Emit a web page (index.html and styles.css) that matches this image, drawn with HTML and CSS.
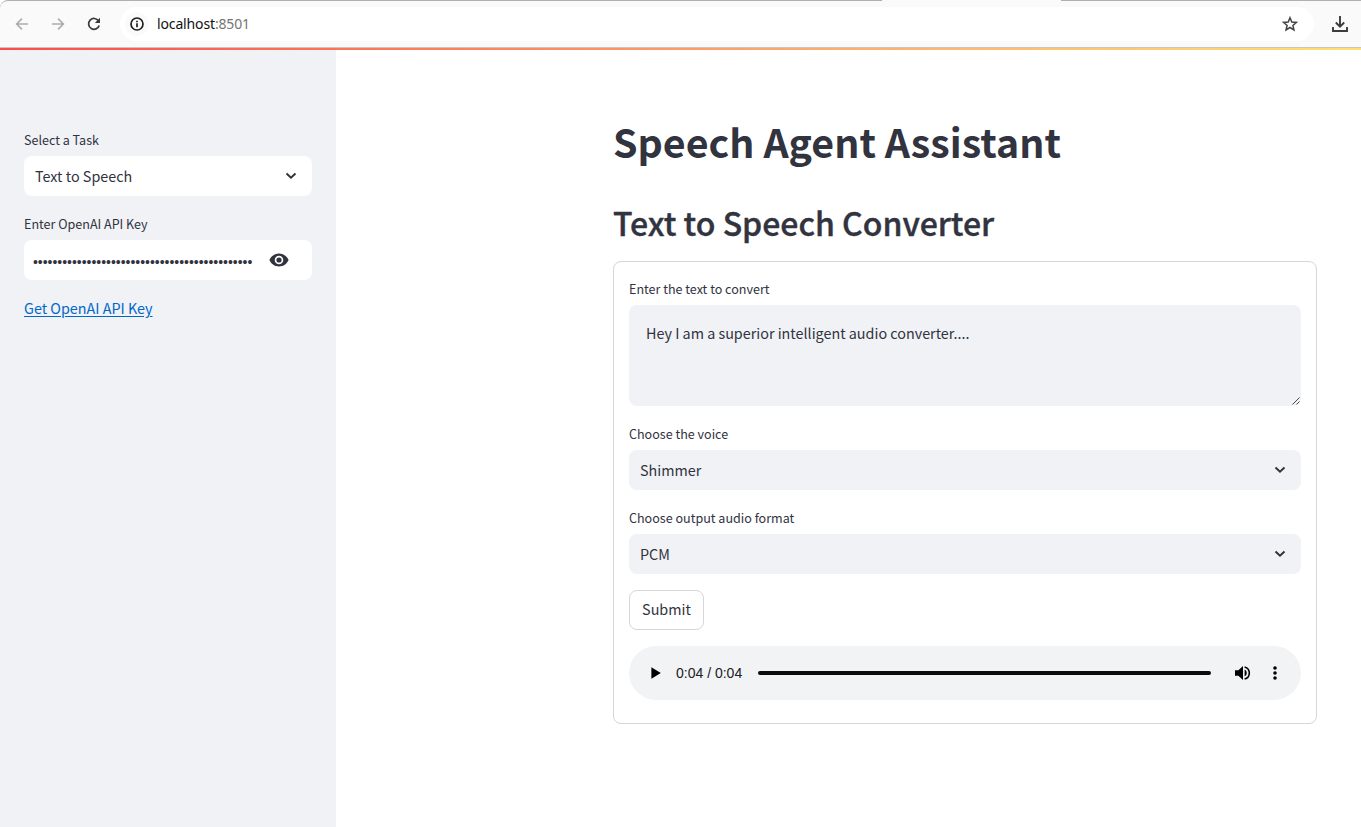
FILE: index.html
```
<!DOCTYPE html>
<html lang="en">
<head>
<meta charset="utf-8">
<title>Speech Agent Assistant</title>
<link rel="stylesheet" href="styles.css">
</head>
<body>
<header class="toolbar">
  <div class="tab-gap"></div>
  <svg class="nav back" viewBox="0 0 14 14"><path d="M13 7H2M7 1.6L1.6 7L7 12.4"/></svg>
  <svg class="nav forward" viewBox="0 0 14 14"><path d="M1 7h11M7 1.6L12.4 7L7 12.4"/></svg>
  <svg class="reload" viewBox="0 0 14 14"><path d="M11.6 4A5.4 5.4 0 1 0 12.2 8.4"/><path class="solid" d="M13 .8V6H7.8z"/></svg>
  <div class="omnibox">
    <span class="info"><svg viewBox="0 0 14 14"><circle cx="7" cy="7" r="6"/><path d="M7 6.3V10.2M7 3.8V5.2"/></svg></span>
    <span class="url">localhost<span class="port">:8501</span></span>
    <svg class="star" viewBox="0 0 16 16"><path d="M8 1.7L9.8 6l4.6.4-3.5 3 1.05 4.5L8 11.5l-3.95 2.4L5.1 9.4 1.6 6.4 6.2 6z"/></svg>
  </div>
  <svg class="download" viewBox="0 0 16 16"><path d="M8 0V10.5M3.8 6.5L8 10.7l4.2-4.2M1 11v4h14v-4"/></svg>
</header>
<div class="decoration"></div>
<div class="app">
  <aside class="sidebar">
    <div class="label">Select a Task</div>
    <div class="select"><span class="value">Text to Speech</span><svg class="chevron" viewBox="0 0 12 8"><path d="M1.500 1.500l4.500 4.200L10.500 1.500"/></svg></div>
    <div class="label">Enter OpenAI API Key</div>
    <div class="select password"><span class="dots">•••••••••••••••••••••••••••••••••••••••••••••</span><svg class="eye" viewBox="0 0 20 14"><path fill-rule="evenodd" d="M10 .6C5.6.6 1.9 3.2.4 7c1.500 3.800 5.200 6.400 9.600 6.400s8.100-2.600 9.600-6.400C18.100 3.200 14.400.6 10 .6zM10 11.300a4.300 4.300 0 1 1 0-8.600 4.300 4.300 0 0 1 0 8.600z"/><circle cx="10" cy="7" r="2.600"/></svg></div>
    <a class="link"><span>Get OpenAI API Key</span></a>
  </aside>
  <main class="main">
    <h1>Speech Agent Assistant</h1>
    <h2>Text to Speech Converter</h2>
    <section class="form">
      <div class="label">Enter the text to convert</div>
      <div class="textarea"><span class="value">Hey I am a superior intelligent audio converter....</span><svg class="grip" viewBox="0 0 8 8"><path d="M.5 7.500l7-7M4.500 7.500l3-3"/></svg></div>
      <div class="label">Choose the voice</div>
      <div class="select"><span class="value">Shimmer</span><svg class="chevron" viewBox="0 0 12 8"><path d="M1.500 1.500l4.500 4.200L10.500 1.500"/></svg></div>
      <div class="label">Choose output audio format</div>
      <div class="select"><span class="value">PCM</span><svg class="chevron" viewBox="0 0 12 8"><path d="M1.500 1.500l4.500 4.200L10.500 1.500"/></svg></div>
      <div class="submit"><span class="value">Submit</span></div>
      <div class="audio">
        <svg class="play" viewBox="0 0 10 12"><path d="M.4.2V11.800L9.800 6z"/></svg>
        <span class="time">0:04 / 0:04</span>
        <div class="track"></div>
        <svg class="volume" viewBox="0 0 16 16"><path d="M0 5.300v5.400h3.400L8 15V1L3.400 5.300z"/><path d="M9.600 4.600v6.800a3.700 3.700 0 0 0 0-6.800z"/><path class="wave" d="M9.600 1.900a6.300 6.300 0 0 1 0 12.200"/></svg>
        <svg class="more" viewBox="0 0 4 14"><circle cx="2" cy="2" r="1.800"/><circle cx="2" cy="7" r="1.800"/><circle cx="2" cy="12" r="1.800"/></svg>
      </div>
    </section>
  </main>
</div>
</body>
</html>
```
FILE: styles.css
```
* { box-sizing: border-box; }
body { margin: 0; height: 827px; overflow: hidden; background: #fff; color: #31333f; font-family: "Noto Sans CJK SC", "Noto Sans", sans-serif; }
svg { display: block; flex: none; overflow: visible; }
h1, h2 { margin: 0; white-space: nowrap; }
.toolbar { position: relative; display: flex; align-items: center; height: 48px; padding: 0 12px 0 15px; background: #fafafa; border-top: 1px solid #b0b0b0; border-bottom: 1px solid #c4c7c5; border-top-left-radius: 8px; }
.tab-gap { position: absolute; top: -1px; left: 882px; width: 179px; height: 1px; background: #fafafa; }
.nav { width: 14px; height: 14px; fill: none; stroke: #adadad; stroke-width: 1.6; }
.forward { margin-left: 22px; }
.reload { width: 14px; height: 14px; margin-left: 22px; fill: none; stroke: #3a3a3a; stroke-width: 1.7; }
.reload .solid { fill: #3a3a3a; stroke: none; }
.omnibox { display: flex; align-items: center; width: 1194px; height: 34px; margin-left: 19px; padding: 0 16px 0 5px; background: #fff; border-radius: 17px; flex: none; }
.info { display: grid; place-items: center; width: 24px; height: 24px; border-radius: 50%; background: #fafafa; }
.info svg { width: 14px; height: 14px; fill: none; stroke: #1f1f1f; stroke-width: 1.7; }
.url { margin-left: 8px; font: 14px/20px "Noto Sans", sans-serif; letter-spacing: -0.14px; color: #111; }
.port { color: #757575; }
.star { width: 16px; height: 16px; margin-left: auto; fill: none; stroke: #444; stroke-width: 1.5; }
.download { width: 16px; height: 16px; margin-left: 18px; fill: none; stroke: #3c3c3c; stroke-width: 1.9; }
.decoration { height: 2px; background: linear-gradient(90deg, #ff4b4b, #ffae69 62%, #ffe072); }
.app { display: flex; height: 777px; }
.sidebar { width: 336px; padding: 80px 24px 0; background: #f0f2f6; flex: none; }
.main { margin-left: 277px; width: 704px; padding-top: 63px; }
h1 { font-size: 39.35px; font-weight: 700; line-height: 56px; }
h2 { margin-top: 29px; font-size: 32px; font-weight: 500; line-height: 48px; -webkit-text-stroke: 0.4px #31333f; }
.form { height: 463px; margin-top: 15px; padding: 17px 15px 0; border: 1px solid #d5d6d8; border-radius: 8px; }
.label { height: 20px; margin-bottom: 6px; font-size: 12.55px; line-height: 20px; white-space: nowrap; }
.value { font-size: 14.35px; line-height: 24px; white-space: nowrap; }
.select { display: flex; align-items: center; justify-content: space-between; height: 40px; margin-bottom: 18px; padding: 0 15px 0 11px; border-radius: 8px; background: #f0f2f6; }
.sidebar .select { background: #fff; }
.chevron { width: 12px; height: 8px; fill: none; stroke: #31333f; stroke-width: 2; }
.password { padding: 0 23px 0 9px; }
.sidebar .password { padding: 0 23px 0 9px; }
.dots { width: 221px; margin-top: 4px; font: 13.93px/20px "Liberation Sans", sans-serif; white-space: nowrap; }
.eye { width: 20px; height: 14px; fill: #31333f; }
.link { display: block; height: 24px; margin-top: -2px; color: #0068c9; font-size: 14.35px; line-height: 24px; text-decoration: underline; text-underline-offset: 2px; }
.textarea { display: flex; justify-content: space-between; height: 101px; margin-bottom: 18px; padding: 16px 1px 1px 17px; border-radius: 8px; background: #f0f2f6; }
.grip { width: 8px; height: 8px; align-self: flex-end; fill: none; stroke: #444650; stroke-width: 1; }
.submit { display: grid; place-items: center; width: 75px; height: 40px; margin-top: -2px; padding-bottom: 2px; border: 1px solid #d5d6d8; border-radius: 8px; }
.audio { display: flex; align-items: center; height: 54px; margin-top: 16px; padding: 0 24px 0 22px; border-radius: 27px; background: #f1f3f4; }
.play { width: 10px; height: 12px; }
.time { width: 67px; margin-left: 15px; font: 14px/20px "Liberation Sans", sans-serif; white-space: nowrap; color: #202124; }
.track { width: 453px; height: 4px; margin-left: 15px; border-radius: 2px; background: #0b0b0b; }
.volume { width: 16px; height: 16px; margin-left: 24px; }
.wave { fill: none; stroke: #000; stroke-width: 1.6; }
.more { width: 4px; height: 14px; margin-left: auto; }
```
